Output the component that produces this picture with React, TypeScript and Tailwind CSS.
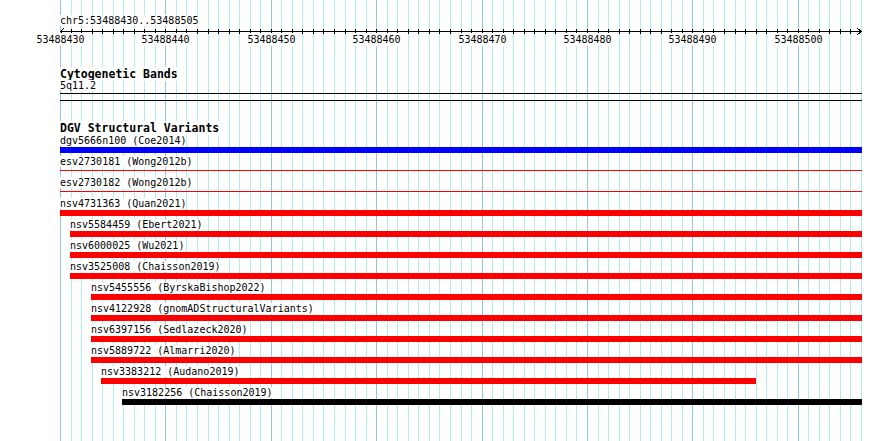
const START = 53488430;
const LEFT = 60;
const SPAN = 76;
const PX = 801 / SPAN;
const gx = (i: number) => Math.round(LEFT + i * PX);

type Row = {
  name: string;
  src: string;
  indent: string;
  kind: "bar" | "line";
  color: string;
  width?: string;
};

const rows: Row[] = [
  { name: "dgv5666n100", src: "Coe2014", indent: "pl-0", kind: "bar", color: "bg-[#0000ff]" },
  { name: "esv2730181", src: "Wong2012b", indent: "pl-0", kind: "line", color: "bg-[#ff0000]" },
  { name: "esv2730182", src: "Wong2012b", indent: "pl-0", kind: "line", color: "bg-[#ff0000]" },
  { name: "nsv4731363", src: "Quan2021", indent: "pl-0", kind: "bar", color: "bg-[#ff0000]" },
  { name: "nsv5584459", src: "Ebert2021", indent: "pl-[10px]", kind: "bar", color: "bg-[#ff0000]" },
  { name: "nsv6000025", src: "Wu2021", indent: "pl-[10px]", kind: "bar", color: "bg-[#ff0000]" },
  { name: "nsv3525008", src: "Chaisson2019", indent: "pl-[10px]", kind: "bar", color: "bg-[#ff0000]" },
  { name: "nsv5455556", src: "ByrskaBishop2022", indent: "pl-[31px]", kind: "bar", color: "bg-[#ff0000]" },
  { name: "nsv4122928", src: "gnomADStructuralVariants", indent: "pl-[31px]", kind: "bar", color: "bg-[#ff0000]" },
  { name: "nsv6397156", src: "Sedlazeck2020", indent: "pl-[31px]", kind: "bar", color: "bg-[#ff0000]" },
  { name: "nsv5889722", src: "Almarri2020", indent: "pl-[31px]", kind: "bar", color: "bg-[#ff0000]" },
  { name: "nsv3383212", src: "Audano2019", indent: "pl-[41px]", kind: "bar", color: "bg-[#ff0000]", width: "w-[655px]" },
  { name: "nsv3182256", src: "Chaisson2019", indent: "pl-[62px]", kind: "bar", color: "bg-[#000000]" },
];

function Grid() {
  const lines = [];
  for (let i = 0; i <= SPAN; i++) {
    lines.push(
      <rect
        key={i}
        x={gx(i)}
        y={0}
        width={1}
        height={441}
        fill={i % 10 === 0 ? "#8cc8e8" : "#afeeee"}
      />
    );
  }
  return (
    <svg className="absolute inset-0" width={890} height={441} shapeRendering="crispEdges">
      {lines}
    </svg>
  );
}

function Axis() {
  const ticks = [];
  for (let i = 1; i < SPAN; i++) {
    ticks.push(<rect key={i} x={gx(i) - LEFT} y={2} width={1} height={5} fill="#000" />);
  }
  const labels = [];
  for (let i = 0; i <= 70; i += 10) {
    labels.push(
      <span
        key={i}
        className="absolute top-[6px] -translate-x-1/2 bg-white leading-[13px]"
        style={{ left: gx(i) - LEFT + 0.5 }}
      >
        {START + i}
      </span>
    );
  }
  return (
    <div className="relative h-[41px]">
      <svg width={802} height={10} className="block" shapeRendering="crispEdges">
        <rect x={0} y={4} width={802} height={1} fill="#000" />
        {ticks}
        <polyline points="4,1 0.5,4.5 4,8" fill="none" stroke="#000" strokeWidth={1} />
        <polyline points="797,1 801.5,4.5 797,8" fill="none" stroke="#000" strokeWidth={1} />
      </svg>
      {labels}
    </div>
  );
}

function Feature({ row }: { row: Row }) {
  return (
    <div className={`h-[21px] ${row.indent}`}>
      <div className="h-[13px] leading-[13px]">
        <span className="bg-white">
          {row.name} ({row.src})
        </span>
      </div>
      {row.kind === "bar" ? (
        <div className={`h-[6px] ${row.width ?? "w-full"} ${row.color}`} />
      ) : (
        <div className="h-[6px] pt-[2px]">
          <div className={`h-px w-full ${row.color}`} />
        </div>
      )}
    </div>
  );
}

export default function App() {
  return (
    <div className="relative w-[890px] h-[441px] overflow-hidden bg-white text-black font-['DejaVu_Sans_Mono','Liberation_Mono',monospace] text-[10px]">
      <Grid />
      <div className="relative ml-[60px] w-[802px] pt-[14px]">
        <div className="h-[13px] leading-[13px]">
          <span className="bg-white">chr5:53488430..53488505</span>
        </div>
        <Axis />

        <div className="h-[11px] leading-[12px] text-[11.5px] font-bold">
          <span className="bg-white">Cytogenetic Bands</span>
        </div>
        <div className="h-[13px] leading-[13px]">
          <span className="bg-white">5q11.2</span>
        </div>
        <div className="mt-px h-[8px] border-y border-black" />

        <div className="mt-[21px] h-[12px] leading-[12px] text-[11.5px] font-bold">
          <span className="bg-white">DGV Structural Variants</span>
        </div>
        {rows.map((r) => (
          <Feature key={r.name + r.src} row={r} />
        ))}
      </div>
    </div>
  );
}
